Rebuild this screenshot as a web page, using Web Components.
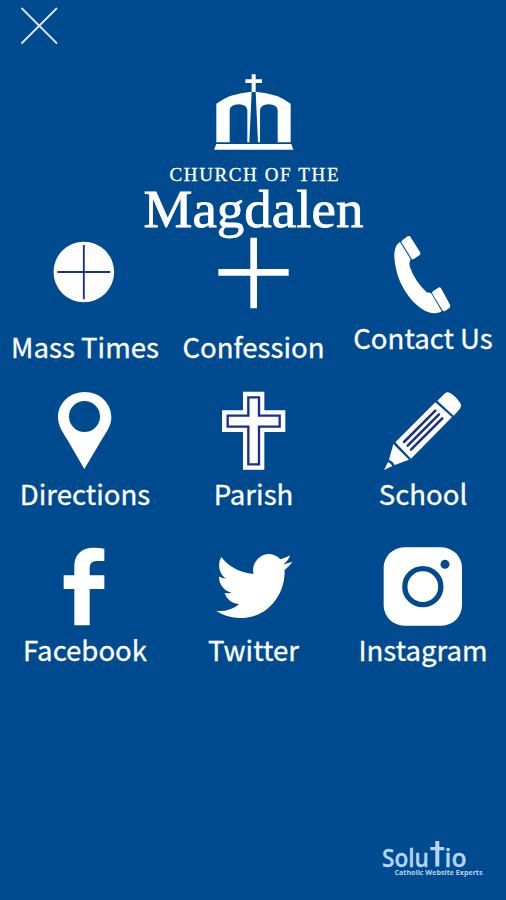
<!DOCTYPE html>
<html lang="en">
<head>
<meta charset="utf-8">
<title>Church of the Magdalen</title>
<style>
  body {
    margin: 0;
    background: #004b8f;
    color: #fff;
    font-family: "Noto Sans CJK SC", "Noto Sans", sans-serif;
  }
</style>
</head>
<body>
<parish-menu>
  <close-button slot="top"></close-button>
  <parish-logo slot="top"></parish-logo>
  <menu-tile icon="host" low>Mass Times</menu-tile>
  <menu-tile icon="plus" low>Confession</menu-tile>
  <menu-tile icon="phone">Contact Us</menu-tile>
  <menu-tile icon="pin">Directions</menu-tile>
  <menu-tile icon="cross">Parish</menu-tile>
  <menu-tile icon="pencil">School</menu-tile>
  <menu-tile icon="facebook">Facebook</menu-tile>
  <menu-tile icon="twitter">Twitter</menu-tile>
  <menu-tile icon="instagram">Instagram</menu-tile>
  <solutio-credit slot="bottom"></solutio-credit>
</parish-menu>

<script>
  // viewBox is three units per pixel, one tile wide and 80px high
  const icons = {
    host: `<svg viewBox="0 15 507 240">
      <circle cx="251.500" cy="126" r="91"/>
      <path class="line" stroke-width="5.500" d="M251.500 45V208M172 126H331"/></svg>`,
    plus: `<svg viewBox="-3 15 504 240">
      <path d="M241 23h20v94h95v20h-95v98h-20v-98h-96v-20h96z"/></svg>`,
    phone: `<svg viewBox="-9 15 507 240">
      <path d="M187 31L203 19Q208 16 212 22L240 66Q243 72 238 76L220 88Q217 90 214 85L185 38Q183 34 187 31Z"/>
      <path d="M180 36L212 88Q206 98 210 112Q225 154 260 187L273 189L305 243Q298 251 275 249C230 240 187 183 172 132C158 82 160 48 180 36Z"/>
      <path d="M279 184L295 173Q300 170 304 176L330 224Q333 231 327 235L315 243Q311 246 307 240L277 191Q275 187 279 184Z"/></svg>`,
    pin: `<svg viewBox="0 33 507 240">
      <path fill-rule="evenodd" d="M254 36C208 36 174 70 174 112C174 139 190 160 202 179L253 267L305 179C317 160 334 139 334 112C334 70 300 36 254 36ZM253.500 63A46.500 46.500 0 1 1 253.500 156A46.500 46.500 0 1 1 253.500 63Z"/></svg>`,
    cross: `<svg viewBox="-3 33 504 240">
      <path d="M219 35h64v56h63v65h-63v113h-64v-113h-63v-65h63z"/>
      <path class="line" stroke-width="7" d="M235 52h32v55h62v33h-62v113h-32v-113h-62v-33h62z"/></svg>`,
    pencil: `<svg viewBox="-9 33 507 240">
      <path d="M292 62L315 40Q321 34 329 38Q348 48 362 71Q366 79 360 86L341 107Z"/>
      <path d="M286 67L336 111L213 236L166 187Z"/>
      <path d="M160 192L207 239L164 255Q159 244 147 239Z"/>
      <path d="M144 246Q153 250 157 258L132 270Z"/>
      <path class="line" stroke-width="7.500" stroke-linecap="round" d="M286 92L192 186M297 103L203 197M307 115L213 209"/></svg>`,
    facebook: `<svg viewBox="0 36 507 240">
      <path d="M313 41V78H290Q269 78 269 99V121H313V162H269V271H223V162H191V121H223V93C223 59 245 38 280 38Q300 38 313 41Z"/></svg>`,
    twitter: `<svg viewBox="-3 36 504 240">
      <path transform="translate(138 35) scale(9.550 9.850)" d="M23.953 4.570a10 10 0 0 1-2.825.775 4.958 4.958 0 0 0 2.163-2.723c-.951.555-2.005.959-3.127 1.184a4.920 4.920 0 0 0-8.384 4.482C7.690 8.095 4.067 6.130 1.640 3.162a4.822 4.822 0 0 0-.666 2.475c0 1.710.870 3.213 2.188 4.096a4.904 4.904 0 0 1-2.228-.616v.060a4.923 4.923 0 0 0 3.946 4.827 4.996 4.996 0 0 1-2.212.085 4.936 4.936 0 0 0 4.604 3.417 9.867 9.867 0 0 1-6.102 2.105c-.390 0-.779-.023-1.170-.067a13.995 13.995 0 0 0 7.557 2.209c9.053 0 13.998-7.496 13.998-13.985 0-.210 0-.420-.015-.630A9.935 9.935 0 0 0 24 4.590z"/></svg>`,
    instagram: `<svg viewBox="-9 36 507 240">
      <rect x="131" y="37" width="235" height="235" rx="61"/>
      <circle class="ring" cx="248.500" cy="155" r="54"/>
      <circle class="dot" cx="315" cy="88" r="13.500"/></svg>`,
  }

  class ParishMenu extends HTMLElement {
    constructor() {
      super()
      this.attachShadow({ mode: 'open' }).innerHTML = `
        <style>
          :host {
            display: flex;
            flex-direction: column;
            width: 506px;
            height: 900px;
            overflow: hidden;
          }
          header {
            height: 235px;
            flex: none;
          }
          main {
            display: grid;
            grid-template-columns: 169px 168px 169px;
            grid-auto-rows: 156px;
          }
          ::slotted(menu-tile:nth-of-type(3n)) {
            --label-inset: 3px;
          }
          footer {
            display: flex;
            justify-content: flex-end;
            margin-top: auto;
            padding: 0 20px 20px;
          }
        </style>
        <header><slot name="top"></slot></header>
        <main><slot></slot></main>
        <footer><slot name="bottom"></slot></footer>
      `
    }
  }

  class CloseButton extends HTMLElement {
    constructor() {
      super()
      this.attachShadow({ mode: 'open' }).innerHTML = `
        <style>
          :host {
            display: block;
            height: 65px;
          }
          svg {
            display: block;
            width: 80px;
            height: 52px;
          }
          path {
            stroke: #dce7ff;
            stroke-width: 1.8;
            stroke-linecap: round;
          }
        </style>
        <svg viewBox="0 0 80 52" role="img" aria-label="Close">
          <path d="M22 8.500L56.500 43M56.500 8.500L22 43"/>
        </svg>
      `
    }
  }

  class ParishLogo extends HTMLElement {
    constructor() {
      super()
      this.attachShadow({ mode: 'open' }).innerHTML = `
        <style>
          :host {
            display: block;
          }
          svg {
            display: block;
            width: 250px;
            height: 170px;
            margin: 0 auto 0 130px;
            overflow: visible;
            fill: currentColor;
            font-family: "Liberation Serif", serif;
          }
          .name {
            stroke: currentColor;
            stroke-width: 0.8;
          }
        </style>
        <svg viewBox="0 0 250 170">
          <g transform="scale(.333333)">
            <path d="M365 28h12v15h19v11h-19v27h-12v-27h-19v-11h19z"/>
            <path d="M365 80L358 232H352V136Q351 119 326 118Q300 119 299 136V232H259V116Q299 85 365 80Z"/>
            <path d="M377 80L384 232H390V136Q391 119 416 118Q442 119 443 136V232H482V116Q443 85 377 80Z"/>
            <path d="M259 237H484L490 254H252Z"/>
          </g>
          <text x="39.500" y="116" font-size="19" textLength="169" stroke="currentColor" stroke-width=".3">CHURCH OF THE</text>
          <text class="name" x="13.500" y="161.500" font-size="52" textLength="220" lengthAdjust="spacingAndGlyphs">Magdalen</text>
        </svg>
      `
    }
  }

  class MenuTile extends HTMLElement {
    constructor() {
      super()
      this.attachShadow({ mode: 'open' }).innerHTML = `
        <style>
          :host {
            display: flex;
            flex-direction: column;
            align-items: center;
            font-size: 27.6px;
            line-height: 44px;
            white-space: nowrap;
          }
          :host([low]) .label {
            margin-top: 9px;
          }
          .icon {
            width: 100%;
            height: 80px;
          }
          .label {
            padding-left: var(--label-inset, 1px);
            -webkit-text-stroke: 0.3px currentColor;
          }
          svg {
            display: block;
            width: 100%;
            height: 80px;
            fill: currentColor;
          }
          .line {
            fill: none;
            stroke: #17308a;
          }
          .ring {
            fill: none;
            stroke: #004b8f;
            stroke-width: 16;
          }
          .dot {
            fill: #004b8f;
          }
        </style>
        <div class="icon"></div>
        <div class="label"><slot></slot></div>
      `
    }

    connectedCallback() {
      this.shadowRoot.querySelector('.icon').innerHTML = icons[this.getAttribute('icon')] || ''
    }
  }

  class SolutioCredit extends HTMLElement {
    constructor() {
      super()
      this.attachShadow({ mode: 'open' }).innerHTML = `
        <style>
          :host {
            display: block;
            color: #b5d4f3;
          }
          svg {
            display: block;
            width: 116px;
            height: 50px;
            fill: currentColor;
            font-family: "Open Sans", sans-serif;
          }
        </style>
        <svg viewBox="370 830 116 50">
          <g font-size="25" font-weight="600" stroke="currentColor" stroke-width=".3">
            <text x="382" y="866.500" textLength="47" lengthAdjust="spacingAndGlyphs">Solu</text>
            <text x="444.500" y="866.500" textLength="22" lengthAdjust="spacingAndGlyphs">io</text>
          </g>
          <path d="M435.300 841h4v6h5v3.200h-5v16.300h-4v-16.300h-5v-3.200h5z"/>
          <text x="394.500" y="874.500" font-size="7.500" font-weight="700" textLength="88" lengthAdjust="spacingAndGlyphs">Catholic Website Experts</text>
        </svg>
      `
    }
  }

  customElements.define('parish-menu', ParishMenu)
  customElements.define('close-button', CloseButton)
  customElements.define('parish-logo', ParishLogo)
  customElements.define('menu-tile', MenuTile)
  customElements.define('solutio-credit', SolutioCredit)
</script>
</body>
</html>
